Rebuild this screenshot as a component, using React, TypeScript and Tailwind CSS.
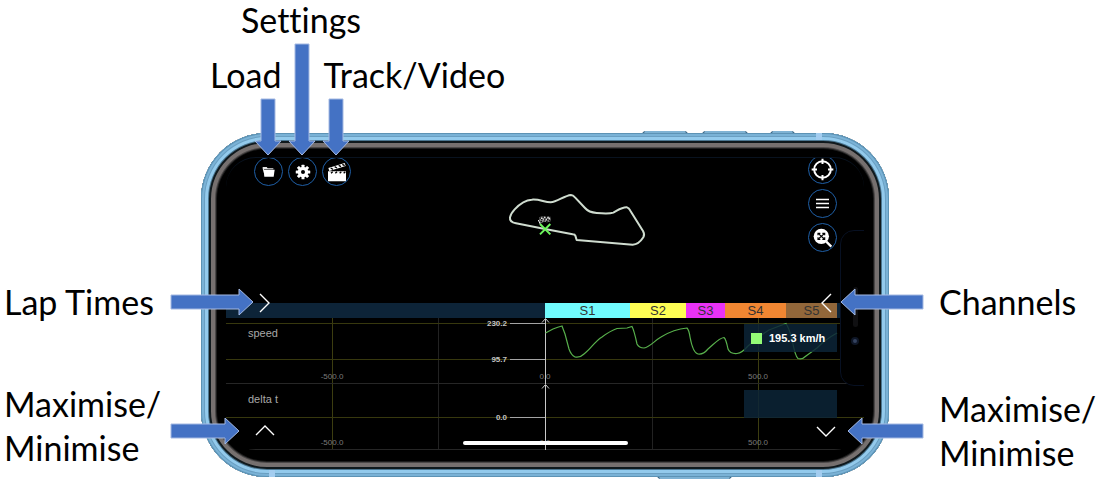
import type { ReactNode } from 'react';

type Direction = 'down' | 'left' | 'right';

const flip: Record<Direction, string> = {
  right: '',
  left: '-scale-x-100',
  down: '',
};

function Arrow({ direction, length, className }: { direction: Direction; length: number; className: string }) {
  const down = direction === 'down';
  const n = length;
  const points = down
    ? `8,1 22,1 22,${n - 15} 28,${n - 15} 15,${n - 1} 2,${n - 15} 8,${n - 15}`
    : `1,8 ${n - 15},8 ${n - 15},2 ${n - 1},15 ${n - 15},28 ${n - 15},22 1,22`;
  return (
    <svg
      aria-hidden="true"
      width={down ? 30 : n}
      height={down ? n : 30}
      className={`pointer-events-none absolute z-20 ${flip[direction]} ${className}`}
    >
      <polygon points={points} fill="#4472c4" stroke="#a4b9e2" strokeWidth="1" />
    </svg>
  );
}

function RoundButton({ label, children }: { label: string; children: ReactNode }) {
  return (
    <button
      type="button"
      aria-label={label}
      className="flex size-[29px] items-center justify-center rounded-full border border-[#1f5fa6] bg-black text-white"
    >
      {children}
    </button>
  );
}

function FolderIcon() {
  return (
    <svg width="13" height="12" viewBox="0 0 39 36" fill="currentColor">
      <path d="M2 8V3h12l3 4h17v3H6l2 19z" opacity=".9" />
      <path d="M5 11h33l-3 21H7z" />
    </svg>
  );
}

function GearIcon() {
  return (
    <svg width="16" height="16" viewBox="0 0 32 32">
      <g fill="currentColor">
        <circle cx="16" cy="16" r="10.5" />
        {[0, 45, 90, 135].map((a) => (
          <rect key={a} x="13" y="1.5" width="6" height="29" rx="1" transform={`rotate(${a} 16 16)`} />
        ))}
      </g>
      <circle cx="16" cy="16" r="4" fill="#000" />
    </svg>
  );
}

function ClapperIcon() {
  return (
    <svg width="20" height="20" viewBox="0 0 60 60">
      <path d="M4 18 53 3l3 9L7 27z" fill="currentColor" />
      <path d="m11 18 7 4M23 14l7 4M35 10l7 4M46 7l7 4" stroke="#000" strokeWidth="4" />
      <path d="M3 28h54v30H3z" fill="currentColor" />
      <path d="m12 34 5-5M25 34l5-5M38 34l5-5M50 34l5-5" stroke="#000" strokeWidth="4" />
    </svg>
  );
}

function TargetIcon() {
  return (
    <svg width="23" height="23" viewBox="0 0 69 69" fill="none" stroke="currentColor">
      <circle cx="34.5" cy="34.5" r="25" strokeWidth="6" />
      <path d="M34.5 2v16M34.5 51v16M2 34.5h16M51 34.5h16" strokeWidth="6" />
    </svg>
  );
}

function MenuIcon() {
  return (
    <svg width="13" height="11" viewBox="0 0 13 11" stroke="currentColor" strokeWidth="1.3">
      <path d="M0 1.5h13M0 5.5h13M0 9.5h13" />
    </svg>
  );
}

function ZoomFitIcon() {
  return (
    <svg width="20" height="20" viewBox="0 0 60 60">
      <path d="m40 41 15 15" stroke="currentColor" strokeWidth="7" />
      <circle cx="25" cy="25" r="23" fill="currentColor" />
      <g stroke="#000" strokeWidth="3.5" fill="none">
        <path d="m16 17 18 16M34 17 16 33" />
        <path d="M15 22v-6h7M28 16h7v6M15 28v6h7M28 34h7v-6" />
      </g>
    </svg>
  );
}

function ChevronButton({ label, path, className }: { label: string; path: string; className: string }) {
  return (
    <button type="button" aria-label={label} className={`absolute z-10 ${className}`}>
      <svg width="20" height="20" viewBox="0 0 20 20" fill="none" stroke="#fff" strokeWidth="1.4">
        <path d={path} />
      </svg>
    </button>
  );
}

function TrackMap() {
  return (
    <svg width="180" height="80" viewBox="0 0 540 240" role="img" aria-label="Track map">
      <path
        d="M165 147 78 130Q58 126 60 112Q62 101 74 88Q100 60 125 59C150 57 162 67 182 67C202 66 222 47 243 45Q249 45 255 52L285 84Q296 97 320 99C342 101 358 102 370 98C385 90 396 81 411 82Q417 84 421 92L459 153Q465 163 460 172Q446 194 428 194L260 180L256 167Q255 163 248 163Z"
        fill="none"
        stroke="#cfdccf"
        strokeWidth="6"
        strokeLinejoin="round"
      />
      <g transform="translate(142 107)">
        <path d="m5 5 14-4 9 3 10-3 3 15-11 4-10-2-12 6z" fill="#8b8b8b" />
        <path
          d="M6 7h5M15 4h5M25 6h5M34 3h5M11 12h5M20 10h5M29 12h5M9 18h5M17 15h5M26 17h5M35 14h5M10 22l3 5"
          stroke="#111"
          strokeWidth="4"
        />
        <path d="M11 8h4M20 6h4M30 5h4M16 13h4M25 12h4M34 9h4M3 13l6 13" stroke="#eee" strokeWidth="3" />
      </g>
      <path d="m150 132 31 31M181 132l-31 31" stroke="#6cf45c" strokeWidth="6" />
    </svg>
  );
}

const sectors = [
  { name: 'S1', width: 'w-[85px]', color: 'bg-[#70fbfd]' },
  { name: 'S2', width: 'w-[56px]', color: 'bg-[#fefe54]' },
  { name: 'S3', width: 'w-[39px]', color: 'bg-[#e932f5]' },
  { name: 'S4', width: 'w-[61px]', color: 'bg-[#f08632]' },
  { name: 'S5', width: 'w-[51px]', color: 'bg-[#92673a]' },
];

const speedTrace =
  'M319.5 15 327 11Q332 9 336 8L339 16 343 31Q345 37 349 39Q354 40 358 36C365 31 368 24 376 19Q384 13 391 10.5L401 10 406 8.5Q408 12 411 26Q413 30 418 30C424 29 428 23 435 19Q448 11 461 10Q463 12 464 19Q467 35 472 36Q477 37 482 31C488 26 493 20 498 19.5Q500 21 502 31Q504 36 511 35.5Q516 35 522 28Q532 19 543 12L560 5.5Q563 10 566 21Q569 38 572 40.5Q576 42 580 38L591 30Q600 21 611 15';

function AxisText({ x, y, children, bold }: { x: number; y: number; children: string; bold?: boolean }) {
  return (
    <text
      x={x}
      y={y}
      fontSize={8}
      fontWeight={bold ? 700 : 400}
      textAnchor={bold ? 'end' : 'middle'}
      fill={bold ? '#c4c4c4' : '#7a7a7a'}
    >
      {children}
    </text>
  );
}

function ChannelPlot({ name, ticks, trace }: { name: string; ticks: { y: number; label: string }[]; trace?: string }) {
  return (
    <svg viewBox="0 0 638 66" className="block w-full" role="img" aria-label={`${name} chart`}>
      <path d="M106.5 0v66M532.5 0v66" stroke="#3c3d10" />
      <path d="M212.5 0v66M426.5 0v66" stroke="#222" />
      {ticks.map((t) => (
        <path key={t.label} d={`M0 ${t.y + 0.5}h638`} stroke="#37380e" />
      ))}
      <path d="M0 65.5h638" stroke="#262626" />
      <AxisText x={106} y={61}>-500.0</AxisText>
      <AxisText x={319} y={61}>0.0</AxisText>
      <AxisText x={532} y={61}>500.0</AxisText>
      {ticks.map((t) => (
        <g key={t.label}>
          <path d={`M284 ${t.y + 0.5}h35`} stroke="#a4a4a4" />
          <AxisText x={281} y={t.y + 3} bold>{t.label}</AxisText>
        </g>
      ))}
      <path d="M319.5 1v65M316 4.5l3.500-4 3.500 4" fill="none" stroke="#c8c8c8" />
      {trace && <path d={trace} fill="none" stroke="#58b04c" strokeWidth="1.2" />}
    </svg>
  );
}

function Channel({
  name,
  ticks,
  trace,
  children,
}: {
  name: string;
  ticks: { y: number; label: string }[];
  trace?: string;
  children?: ReactNode;
}) {
  return (
    <section className="relative">
      <ChannelPlot name={name} ticks={ticks} trace={trace} />
      <h2 className="absolute top-2 left-[22px] text-[11px] leading-[14px] text-[#a8a8a8]">{name}</h2>
      <div className="absolute top-[6px] right-[27px] flex h-[28px] w-[93px] items-center gap-[7px] bg-[#0c2437]/85 pl-[7px]">
        {children}
      </div>
    </section>
  );
}

function Screen() {
  return (
    <div className="relative overflow-hidden rounded-[30px] border-t border-[#08121f] bg-black">
      <div className="flex h-[145px] items-start">
        <nav aria-label="Files and view" className="-mt-px flex gap-[5px] pl-[28px]">
          <RoundButton label="Load"><FolderIcon /></RoundButton>
          <RoundButton label="Settings"><GearIcon /></RoundButton>
          <RoundButton label="Track/Video"><ClapperIcon /></RoundButton>
        </nav>
        <div className="flex-1 pt-[22px] pl-[139px]">
          <TrackMap />
        </div>
        <nav aria-label="Chart tools" className="-mt-[3px] flex flex-col gap-[5px] pr-[27px]">
          <RoundButton label="Centre"><TargetIcon /></RoundButton>
          <RoundButton label="Menu"><MenuIcon /></RoundButton>
          <RoundButton label="Zoom to fit"><ZoomFitIcon /></RoundButton>
        </nav>
      </div>

      <div className="flex h-[15px] bg-[#0d2438] pr-[27px] text-[13px] leading-[16px] text-[#333]">
        <div className="flex-1" />
        {sectors.map((s) => (
          <div key={s.name} className={`${s.width} ${s.color} text-center`}>{s.name}</div>
        ))}
      </div>

      <Channel name="speed" trace={speedTrace} ticks={[{ y: 5, label: '230.2' }, { y: 41, label: '95.7' }]}>
        <span className="size-[11px] bg-[#93fb76]" />
        <span className="text-[11px] font-bold whitespace-nowrap text-white">195.3 km/h</span>
      </Channel>
      <Channel name="delta t" ticks={[{ y: 33, label: '0.0' }]} />

      <div className="absolute top-[72px] -right-[10px] flex h-[156px] w-[34px] flex-col items-center justify-end gap-[10px] rounded-l-[14px] border border-[#071022] bg-black pr-[4px] pb-[40px]">
        <span className="h-[40px] w-[5px] rounded-full bg-[#101012]" />
        <span className="size-[8px] rounded-full border-2 border-[#0e1626] bg-[#34425e]" />
      </div>

      <ChevronButton label="Show lap times" path="m5 1 9 9-9 9" className="top-[135px] left-[29px]" />
      <ChevronButton label="Show channels" path="m15 1-9 9 9 9" className="top-[135px] right-[28px]" />
      <ChevronButton label="Maximise" path="m1 14 9-9 9 9" className="bottom-[9px] left-[29px]" />
      <ChevronButton label="Minimise" path="m1 6 9 9 9-9" className="right-[28px] bottom-[9px]" />
      <div className="absolute bottom-[5px] left-[237px] h-[4px] w-[165px] rounded-full bg-white" />
    </div>
  );
}

function Phone() {
  return (
    <div className="relative font-['Liberation_Sans',Arial,sans-serif]">
      <span className="absolute -top-[2px] right-[201px] h-[4px] w-[46px] rounded-t border-x-2 border-[#3f6a88] bg-[#7fb2d3]" />
      <span className="absolute -top-[2px] right-[141px] h-[4px] w-[46px] rounded-t border-x-2 border-[#3f6a88] bg-[#7fb2d3]" />
      <span className="absolute -top-[2px] right-[94px] h-[4px] w-[25px] rounded-t border-x-2 border-[#3f6a88] bg-[#7fb2d3]" />
      <span className="absolute right-[157px] -bottom-[2px] h-[4px] w-[75px] rounded-b border-x-2 border-[#3f6a88] bg-[#7fb2d3]" />
      <div className="relative rounded-[66px] bg-black px-[25px] pt-[24px] pb-[27px] shadow-[inset_0_0_0_1px_#5d93b5,inset_0_0_0_3px_#7ab2d6,inset_0_0_0_4px_#6a9fc2,inset_0_0_0_7px_#93caec,inset_0_0_0_8px_#4b7690,inset_0_0_0_10px_#10191d,inset_0_0_0_14px_#76706f,inset_0_0_0_15px_#4b4848,inset_0_0_0_16px_#1c1c1c]">
        <Screen />
      </div>
      <span className="absolute top-0 right-[67px] h-[7px] w-[6px] bg-[#a3cdf0]" />
      <span className="absolute right-[67px] bottom-0 h-[7px] w-[6px] bg-[#a3cdf0]" />
      <span className="absolute bottom-0 left-[68px] h-[7px] w-[6px] bg-[#a3cdf0]" />
    </div>
  );
}

export default function App() {
  return (
    <main className="w-full bg-white pb-[20px] font-[Lato,sans-serif] text-[34px] leading-[40px] text-black [font-variant-ligatures:none]">
      <header className="flex h-[133px] flex-col gap-[15px]">
        <div className="relative ml-[241px] w-fit">
          Settings
          <Arrow direction="down" length={113} className="top-[43px] left-[46px]" />
        </div>
        <div className="ml-[210px] flex gap-[42px]">
          <div className="relative">
            Load
            <Arrow direction="down" length={58} className="top-[43px] left-[43px]" />
          </div>
          <div className="relative">
            Track/Video
            <Arrow direction="down" length={58} className="top-[43px] -left-[2px]" />
          </div>
        </div>
      </header>
      <div className="grid grid-cols-[201px_minmax(0,1fr)_211px]">
        <aside className="relative flex flex-col gap-[60px] pt-[149px] pl-1">
          <p>Lap Times</p>
          <p className="leading-[44px]">Maximise/<br />Minimise</p>
          <Arrow direction="right" length={84} className="top-[154px] left-[170px]" />
          <Arrow direction="right" length={70} className="top-[283px] left-[170px]" />
        </aside>
        <Phone />
        <aside className="relative flex flex-col gap-[65px] pt-[149px] pl-[50px]">
          <p>Channels</p>
          <p className="leading-[44px]">Maximise/<br />Minimise</p>
          <Arrow direction="left" length={84} className="top-[154px] right-[176px]" />
          <Arrow direction="left" length={77} className="top-[283px] right-[176px]" />
        </aside>
      </div>
    </main>
  );
}
